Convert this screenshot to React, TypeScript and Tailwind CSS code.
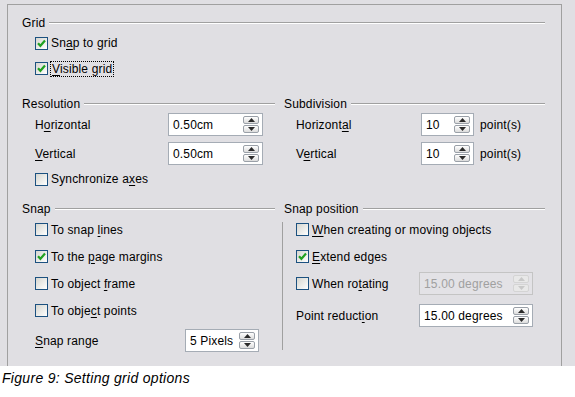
import type { ReactNode } from "react";

const FONT = { fontFamily: '"Liberation Sans", Arial, sans-serif' };

function U({ children }: { children: ReactNode }) {
  return <span className="underline underline-offset-2">{children}</span>;
}

function Heading({ label }: { label: string }) {
  return (
    <div className="flex h-[18px] items-center">
      <span>{label}</span>
      <div className="ml-[4px] flex-1 border-t border-b border-t-[#a0a0a0] border-b-white" />
    </div>
  );
}

function Check({ checked }: { checked?: boolean }) {
  return (
    <span className="flex h-[13px] w-[13px] shrink-0 items-center justify-center border border-[#1c5180] bg-linear-to-br from-[#d6d6d0] to-white">
      {checked && (
        <svg width="9" height="9" viewBox="0 0 9 9">
          <path d="M1 4.2 L3.4 6.8 L8 1.6" fill="none" stroke="#21a121" strokeWidth="2.2" />
        </svg>
      )}
    </span>
  );
}

function Spin({ disabled }: { disabled?: boolean }) {
  const fill = disabled ? "#c8c8c8" : "#2a2a2a";
  const btn =
    "flex h-[8px] w-[16px] items-center justify-center rounded-[2px] border " +
    (disabled ? "border-[#d4d4d4] bg-[#e8e8e8]" : "border-[#9aa0a8] bg-linear-to-b from-white to-[#dcdcdc]");
  return (
    <div className="flex flex-col gap-[1px]">
      <div className={btn}>
        <svg width="7" height="4" viewBox="0 0 7 4">
          <path d="M0 4 L3.5 0 L7 4 Z" fill={fill} />
        </svg>
      </div>
      <div className={btn}>
        <svg width="7" height="4" viewBox="0 0 7 4">
          <path d="M0 0 L3.5 4 L7 0 Z" fill={fill} />
        </svg>
      </div>
    </div>
  );
}

function Field({ value, width, disabled }: { value: string; width: string; disabled?: boolean }) {
  return (
    <div
      className={
        "flex h-[23px] items-center justify-between border pl-[4px] pr-[3px] " +
        width +
        (disabled ? " border-[#c4c4c4] bg-[#e3e2e6] text-[#a0a0a0]" : " border-[#a5acb5] bg-white")
      }
    >
      <span>{value}</span>
      <Spin disabled={disabled} />
    </div>
  );
}

function CheckRow({ label, checked, h = "h-[23px]", cls = "" }: { label: ReactNode; checked?: boolean; h?: string; cls?: string }) {
  return (
    <div className={"flex items-center " + h + " " + cls}>
      <Check checked={checked} />
      <span className="ml-[3px]">{label}</span>
    </div>
  );
}

export default function App() {
  return (
    <div className="h-[397px] w-[575px] bg-white text-[12px] tracking-[0.15px] text-black" style={FONT}>
      <div className="h-[366px] bg-[#e0dfe3] pt-[4px]">
        <div className="ml-[7px] h-[362px] w-[555px] border-x border-t border-[#a0a0a0] pl-[14px] pr-[16px] pt-[9px]">
          <Heading label="Grid" />
          <div className="pl-[13px]">
            <CheckRow h="h-[22px]" checked label={<>Sn<U>a</U>p to grid</>} />
            <div className="mt-[3px] flex h-[23px] items-center">
              <Check checked />
              <span className="ml-[2px] border border-dotted border-black px-[1px] leading-[14px]">
                <U>V</U>isible grid
              </span>
            </div>
          </div>

          <div className="mt-[15px] grid grid-cols-[253px_261px] gap-x-[9px]">
            <div>
              <Heading label="Resolution" />
              <div className="pl-[13px]">
                <div className="flex h-[23px] items-center">
                  <span className="w-[133px]">H<U>o</U>rizontal</span>
                  <Field value="0.50cm" width="w-[95px]" />
                </div>
                <div className="mt-[6px] flex h-[23px] items-center">
                  <span className="w-[133px]"><U>V</U>ertical</span>
                  <Field value="0.50cm" width="w-[95px]" />
                </div>
                <CheckRow h="h-[22px]" cls="mt-[3px]" label={<>Synchronize a<U>x</U>es</>} />
              </div>
            </div>
            <div>
              <Heading label="Subdivision" />
              <div className="pl-[12px]">
                <div className="flex h-[23px] items-center">
                  <span className="w-[125px]">Horizont<U>a</U>l</span>
                  <Field value="10" width="w-[53px]" />
                  <span className="ml-[6px]">point(s)</span>
                </div>
                <div className="mt-[6px] flex h-[23px] items-center">
                  <span className="w-[125px]">V<U>e</U>rtical</span>
                  <Field value="10" width="w-[53px]" />
                  <span className="ml-[6px]">point(s)</span>
                </div>
              </div>
            </div>

            <div className="mt-[10px]">
              <Heading label="Snap" />
              <div className="pl-[13px]">
                <CheckRow label={<>To snap <U>l</U>ines</>} />
                <CheckRow cls="mt-[4px]" checked label={<>To the <U>p</U>age margins</>} />
                <CheckRow cls="mt-[4px]" label={<>To object <U>f</U>rame</>} />
                <CheckRow cls="mt-[4px]" label={<>To obje<U>c</U>t points</>} />
                <div className="mt-[7px] flex h-[23px] items-center">
                  <span className="w-[150px]"><U>S</U>nap range</span>
                  <Field value="5 Pixels" width="w-[74px]" />
                </div>
              </div>
            </div>
            <div className="mt-[10px]">
              <Heading label="Snap position" />
              <div className="ml-[-2px] mt-[4px] border-l border-[#a0a0a0] pb-[23px] pl-[13px]">
                <CheckRow h="h-[15px]" label={<><U>W</U>hen creating or moving objects</>} />
                <CheckRow cls="mt-[8px]" checked label={<><U>E</U>xtend edges</>} />
                <div className="mt-[4px] flex h-[23px] items-center">
                  <div className="flex w-[123px] items-center">
                    <Check />
                    <span className="ml-[3px]">When ro<U>t</U>ating</span>
                  </div>
                  <Field value="15.00 degrees" width="w-[114px]" disabled />
                </div>
                <div className="mt-[9px] flex h-[23px] items-center">
                  <span className="w-[123px]">Point reduct<U>i</U>on</span>
                  <Field value="15.00 degrees" width="w-[114px]" />
                </div>
              </div>
            </div>
          </div>
        </div>
      </div>
      <div className="pl-[2px] pt-[4px] text-[14px] italic leading-[16px] tracking-[0.3px]">
        Figure 9: Setting grid options
      </div>
    </div>
  );
}
